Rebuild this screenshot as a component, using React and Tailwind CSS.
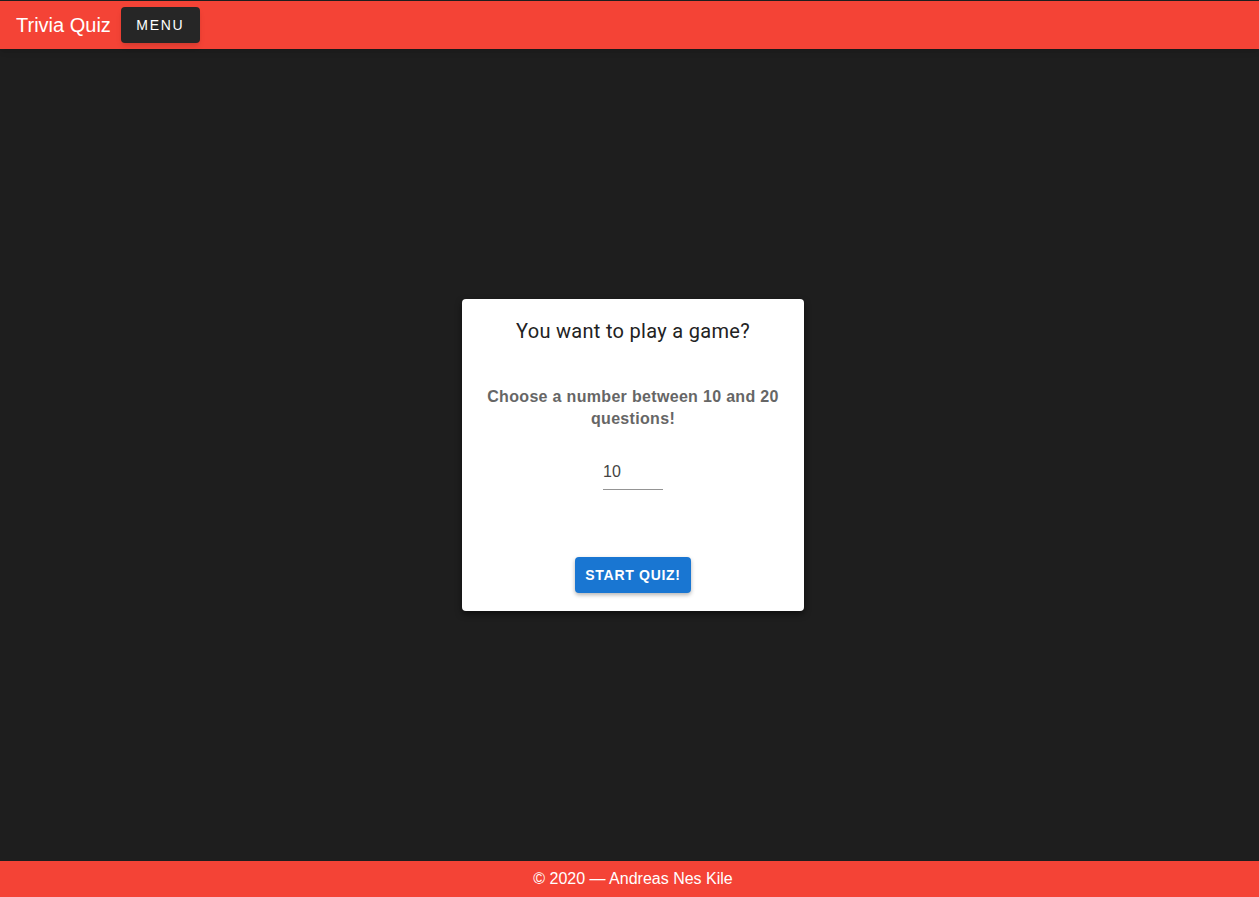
export default function App() {
  return (
    <div className="h-[897px] flex flex-col bg-[#1e1e1e] font-['Liberation_Sans',Arial,sans-serif]">
      {/* Header */}
      <header className="h-[49px] border-t border-[#1e1e1e] bg-[#f44336] flex items-center px-4 gap-[10px] shadow-md">
        <span className="text-white text-[20px] leading-none">Trivia Quiz</span>
        <button className="h-9 w-[79px] rounded bg-[#262626] text-white text-[14px] tracking-[0.12em] shadow-md">
          MENU
        </button>
      </header>

      {/* Main */}
      <main className="flex-1 flex items-center justify-center pl-[7px]">
        <div className="w-[342px] h-[312px] bg-white rounded shadow-[0_3px_6px_rgba(0,0,0,0.5)] flex flex-col items-center pt-[18px]">
          <h2 className="text-[20px] leading-[28px] tracking-[0.015em] text-[#222] font-['Roboto',sans-serif]">You want to play a game?</h2>
          <p className="mt-[41px] px-5 text-center text-[16px] leading-[22px] font-bold tracking-[0.02em] text-[#666]">
            Choose a number between 10 and 20 questions!
          </p>
          <div className="mt-[30px] w-[60px] border-b border-[#949494] pb-[5px]">
            <span className="text-[16px] leading-[20px] text-[#444]">10</span>
          </div>
          <button className="mt-[67px] h-9 w-[116px] rounded bg-[#1976d2] text-white text-[14px] font-bold tracking-[0.05em] shadow-[0_2px_4px_rgba(0,0,0,0.3)]">
            START QUIZ!
          </button>
        </div>
      </main>

      {/* Footer */}
      <footer className="h-9 bg-[#f44336] flex items-center justify-center pl-[7px] text-white text-[16px]">
        © 2020 — Andreas Nes Kile
      </footer>
    </div>
  );
}
